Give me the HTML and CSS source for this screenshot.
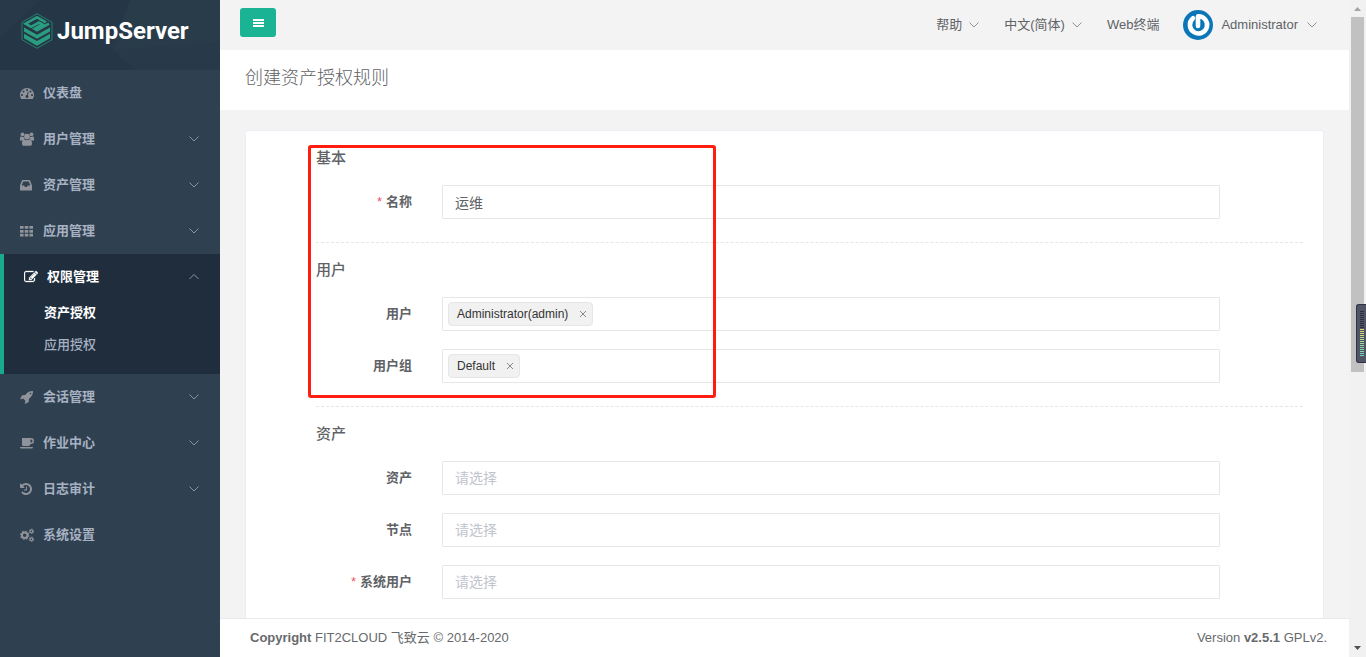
FILE: index.html
```html
<!DOCTYPE html>
<html lang="zh-CN">
<head>
<meta charset="utf-8">
<title>JumpServer</title>
<link rel="stylesheet" href="styles.css">
</head>
<body>
<svg class="symbols" aria-hidden="true">
  <symbol id="down" viewBox="0 0 12 12"><path d="M1.500 3.500L6 8l4.500-4.500" fill="none" stroke="currentColor"/></symbol>
  <symbol id="up" viewBox="0 0 12 12"><path d="M1.500 8L6 3.500 10.500 8" fill="none" stroke="currentColor"/></symbol>
</svg>
<div class="app">
  <aside class="sidebar">
    <a class="brand" href="#">
      <svg class="brand-bg" viewBox="0 0 220 70" preserveAspectRatio="none" aria-hidden="true">
        <path d="M0 0h220v70H0z" fill="#283a49"/><path d="M0 38L40 0h90l-20 48 26 22H0z" fill="#253746"/><path d="M130 0h90v42l-106 8z" fill="#293c4a"/>
      </svg>
      <svg class="brand-mark" viewBox="0 0 32 36" aria-hidden="true">
        <path d="M16 .7L31 9.300v17.400L16 35.300 1 26.700V9.300z" fill="none" stroke="#24806e"/>
        <path d="M25 9.300L16 4.300 4.500 10.700 10 13.800 18 9.500 21.500 11.500 13.500 15.800 16 17.200 28 10.700" fill="none" stroke="#2a9d80" stroke-width="2.600"/>
        <g fill="#2a9d80">
          <path d="M3 14.500l13 7.200 13-7.200v4L16 25.700 3 18.500z"/>
          <path d="M3 20.800L16 28l13-7.200v4.500L16 32.800 3 25.300z"/>
        </g>
      </svg>
      <span class="brand-name">JumpServer</span>
    </a>
    <nav>
      <ul class="menu">
        <li><a class="menu-link" href="#"><svg class="icon" viewBox="0 0 1792 1792"><path d="M384 1152q0-53-37.500-90.500t-90.500-37.500-90.500 37.500-37.500 90.500 37.500 90.500 90.500 37.500 90.500-37.500 37.500-90.500zm192-448q0-53-37.500-90.500t-90.500-37.500-90.500 37.500-37.500 90.500 37.500 90.500 90.500 37.500 90.500-37.500 37.500-90.500zm428 481l101-382q6-26-7.500-48.500t-38.500-29.500-48 6.500-30 39.500l-101 382q-60 5-107 43.500t-63 98.500q-20 77 20 146t117 89 146-20 89-117q16-60-6-117t-72-91zm660-33q0-53-37.500-90.500t-90.500-37.500-90.500 37.500-37.500 90.500 37.500 90.500 90.500 37.500 90.500-37.500 37.500-90.500zm-640-640q0-53-37.500-90.500t-90.500-37.500-90.500 37.500-37.500 90.500 37.500 90.500 90.500 37.500 90.500-37.500 37.500-90.500zm448 192q0-53-37.500-90.500t-90.500-37.500-90.500 37.500-37.500 90.500 37.500 90.500 90.500 37.500 90.500-37.500 37.500-90.500zm320 448q0 261-141 483-19 29-54 29h-1402q-35 0-54-29-141-221-141-483 0-182 71-348t191-286 286-191 348-71 348 71 286 191 191 286 71 348z"/></svg><span>仪表盘</span></a></li>
        <li><a class="menu-link" href="#"><svg class="icon" viewBox="0 0 14 14"><circle cx="2.500" cy="2.300" r="1.900"/><circle cx="11.500" cy="2.300" r="1.900"/><circle cx="7" cy="4.600" r="2.900"/><path d="M0 8.500V6.500C0 4.800.6 4.400 1.200 4.600q1.400.7 2.500.2.100 1.500 1 2.300-1 .2-1.700 1.400zM14 8.500v-2c0-1.700-.6-2.100-1.200-1.900q-1.400.7-2.500.2-.1 1.500-1 2.300 1 .2 1.700 1.400zM2 11.500C2 8.800 3 7.500 4.300 7.500q2.700 1.500 5.400 0C11 7.500 12 8.800 12 11.500c0 1.500-.8 2.300-1.800 2.300H3.800c-1 0-1.800-.8-1.800-2.300z"/></svg><span>用户管理</span><svg class="caret"><use href="#down"/></svg></a></li>
        <li><a class="menu-link" href="#"><svg class="icon" viewBox="0 0 14 14"><path fill-rule="evenodd" d="M2.700 2h6.600q.6 0 .8.600L12 7.500V12q0 .6-.6.600H.6Q0 12.600 0 12V7.500l1.900-4.900q.2-.6.800-.6zM3.200 3.500L1.700 7.500h2.500l.8 1.600h2l.8-1.600h2.500L8.800 3.500z"/></svg><span>资产管理</span><svg class="caret"><use href="#down"/></svg></a></li>
        <li><a class="menu-link" href="#"><svg class="icon" viewBox="0 0 14 14"><path d="M0 2h3.600v2.800H0zM4.700 2h3.600v2.800H4.700zM9.400 2H13v2.800H9.400zM0 5.900h3.600v2.800H0zM4.700 5.900h3.600v2.800H4.700zM9.400 5.900H13v2.800H9.400zM0 9.800h3.600v2.700H0zM4.700 9.800h3.600v2.700H4.700zM9.400 9.800H13v2.700H9.400z"/></svg><span>应用管理</span><svg class="caret"><use href="#down"/></svg></a></li>
        <li class="open"><a class="menu-link" href="#"><svg class="icon" viewBox="0 0 1792 1792"><path d="M888 1184l116-116-152-152-116 116v56h96v96h56zm440-720q-16-16-33 1l-350 350q-17 17-1 33t33-1l350-350q17-17 1-33zm80 594v190q0 119-84.500 203.500t-203.500 84.500h-832q-119 0-203.500-84.500t-84.500-203.500v-832q0-119 84.500-203.500t203.500-84.500h832q63 0 117 25 15 7 18 23 3 17-9 29l-49 49q-14 14-32 8-23-6-45-6h-832q-66 0-113 47t-47 113v832q0 66 47 113t113 47h832q66 0 113-47t47-113v-126q0-13 9-22l64-64q15-15 35-7t20 29zm-96-738l288 288-672 672h-288v-288zm444 132l-92 92-288-288 92-92q28-28 68-28t68 28l152 152q28 28 28 68t-28 68z" stroke="currentColor" stroke-width="40"/></svg><span>权限管理</span><svg class="caret"><use href="#up"/></svg></a>
          <ul class="submenu">
            <li><a class="current" href="#">资产授权</a></li>
            <li><a href="#">应用授权</a></li>
          </ul>
        </li>
        <li><a class="menu-link" href="#"><svg class="icon" viewBox="0 0 1792 1792"><path d="M1440 448q0-40-28-68t-68-28-68 28-28 68 28 68 68 28 68-28 28-68zm224-288q0 249-75.500 430.500t-253.500 360.500q-81 80-195 176l-20 379q-2 16-16 26l-384 224q-7 4-16 4-12 0-23-9l-64-64q-13-14-8-32l85-276-281-281-276 85q-3 1-9 1-14 0-23-9l-64-64q-17-19-5-39l224-384q10-14 26-16l379-20q96-114 176-195 188-187 358-258t431-71q14 0 24 9.500t10 22.500z"/></svg><span>会话管理</span><svg class="caret"><use href="#down"/></svg></a></li>
        <li><a class="menu-link" href="#"><svg class="icon" viewBox="0 0 14 14"><path fill-rule="evenodd" d="M2 2h9a3 3 0 0 1 0 6h-.5Q10.300 10 8.500 10h-5Q2 10 2 8.500zM10.500 3.500v3h.5a1.500 1.500 0 0 0 0-3z"/><path d="M0 11h13q0 1.500-1.500 1.500h-10Q0 12.500 0 11z"/></svg><span>作业中心</span><svg class="caret"><use href="#down"/></svg></a></li>
        <li><a class="menu-link" href="#"><svg class="icon" viewBox="128 0 1792 1792"><path d="M1664 896q0 156-61 298t-164 245-245 164-298 61q-172 0-327-72.500t-264-204.500q-7-10-6.500-22.500t8.500-20.500l137-138q10-9 25-9 16 2 23 12 73 95 179 147t225 52q104 0 198.500-40.500t163.500-109.500 109.500-163.500 40.500-198.500-40.500-198.500-109.500-163.500-163.500-109.500-198.500-40.500q-98 0-188 35.500t-160 101.500l137 138q31 30 14 69-17 40-59 40h-448q-26 0-45-19t-19-45v-448q0-42 40-59 39-17 69 14l130 129q107-101 244.500-156.500t284.500-55.500q156 0 298 61t245 164 164 245 61 298zm-640-288v448q0 14-9 23t-23 9h-320q-14 0-23-9t-9-23v-64q0-14 9-23t23-9h224v-352q0-14 9-23t23-9h64q14 0 23 9t9 23z"/></svg><span>日志审计</span><svg class="caret"><use href="#down"/></svg></a></li>
        <li><a class="menu-link" href="#"><svg class="icon" viewBox="0 0 14 14"><g fill="none" stroke="currentColor"><circle cx="4.700" cy="7.300" r="2.800" stroke-width="2"/><circle cx="4.700" cy="7.300" r="4.100" stroke-width="1.200" stroke-dasharray="1.600 1.620"/><circle cx="11.500" cy="3.300" r="1.500" stroke-width="1.300"/><circle cx="11.500" cy="3.300" r="2.300" stroke-width=".8" stroke-dasharray="1.200 1.200"/><circle cx="11.500" cy="11.300" r="1.500" stroke-width="1.300"/><circle cx="11.500" cy="11.300" r="2.300" stroke-width=".8" stroke-dasharray="1.200 1.200"/></g></svg><span>系统设置</span></a></li>
      </ul>
    </nav>
  </aside>

  <div class="main">
    <header class="topbar">
      <button class="toggle" type="button" aria-label="切换菜单"><svg viewBox="0 0 12 10"><path d="M1 1h11v2H1zM1 4h11v2H1zM1 7h11v2H1z" fill="#fff"/></svg></button>
      <div class="top-links">
        <a class="top-link" href="#">帮助<svg class="caret"><use href="#down"/></svg></a>
        <a class="top-link" href="#">中文(简体)<svg class="caret"><use href="#down"/></svg></a>
        <a class="top-link" href="#">Web终端</a>
        <a class="top-link user" href="#">
          <svg class="avatar" viewBox="0 0 30 30" aria-hidden="true"><circle cx="15" cy="15" r="15" fill="#0a76b8"/><path d="M10 8.300A8.600 8.600 0 1 0 15 6.300V16" fill="none" stroke="#fff" stroke-width="4.600" stroke-linejoin="round" stroke-linecap="round"/></svg>
          <span>Administrator</span><svg class="caret"><use href="#down"/></svg>
        </a>
      </div>
    </header>
    <div class="page-heading"><h1>创建资产授权规则</h1></div>
    <main class="content">
      <form class="card">
        <section class="group">
          <h2>基本</h2>
          <div class="fields">
            <div class="field"><label for="name"><span class="star">*</span>名称</label><input class="control" id="name" type="text" value="运维"></div>
          </div>
        </section>
        <section class="group">
          <h2>用户</h2>
          <div class="fields">
            <div class="field"><label for="users">用户</label><div class="control tags"><span class="tag">Administrator(admin)<button type="button" aria-label="移除"><svg viewBox="0 0 8 8"><path d="M1 1l6 6M7 1L1 7" stroke="currentColor"/></svg></button></span><input id="users" type="text"></div></div>
            <div class="field"><label for="groups">用户组</label><div class="control tags"><span class="tag">Default<button type="button" aria-label="移除"><svg viewBox="0 0 8 8"><path d="M1 1l6 6M7 1L1 7" stroke="currentColor"/></svg></button></span><input id="groups" type="text"></div></div>
          </div>
        </section>
        <section class="group">
          <h2>资产</h2>
          <div class="fields">
            <div class="field"><label for="assets">资产</label><input class="control" id="assets" type="text" placeholder="请选择"></div>
            <div class="field"><label for="nodes">节点</label><input class="control" id="nodes" type="text" placeholder="请选择"></div>
            <div class="field"><label for="sysusers"><span class="star">*</span>系统用户</label><input class="control" id="sysusers" type="text" placeholder="请选择"></div>
          </div>
        </section>
        <div class="highlight"></div>
      </form>
    </main>
    <footer class="footer">
      <span><b>Copyright</b> FIT2CLOUD 飞致云 © 2014-2020</span>
      <span>Version <b>v2.5.1</b> GPLv2.</span>
    </footer>
  </div>

  <div class="scrollbar" aria-hidden="true">
    <svg class="arrow" viewBox="0 0 17 17"><path d="M5 11h7L8.500 7z" fill="#a3a3a3"/></svg>
    <div class="track"><div class="thumb"></div></div>
    <svg class="arrow" viewBox="0 0 17 17"><path d="M5 6h7l-3.500 4z" fill="#505050"/></svg>
    <div class="meter"><i class="idle"></i><i class="level"></i></div>
  </div>
</div>
</body>
</html>
```

FILE: styles.css
```css
* { box-sizing: border-box; }
body {
  margin: 0;
  font: 13px/20px "Liberation Sans", "Noto Sans CJK SC", sans-serif;
  color: #606266;
}
a { color: inherit; text-decoration: none; }
ul { list-style: none; margin: 0; padding: 0; }
svg { display: block; flex: none; }
.symbols { display: none; }
.app { display: flex; height: 100vh; overflow: hidden; }
.caret { width: 12px; height: 12px; color: #909399; }

.sidebar { width: 220px; flex: none; background: #2f4050; color: #a7b1c2; }
.brand {
  position: relative;
  display: flex;
  align-items: center;
  gap: 4px;
  height: 70px;
  padding: 0 20px 8px 21px;
}
.brand-bg { position: absolute; inset: 0; width: 100%; height: 100%; }
.brand-mark { position: relative; width: 32px; height: 36px; }
.brand-name { position: relative; font: 700 24px/36px Roboto, sans-serif; color: #fff; }
.menu-link {
  display: flex;
  align-items: center;
  height: 46px;
  padding: 0 20px;
  font-weight: 600;
}
.icon { width: 14px; height: 14px; margin-right: 9px; fill: currentColor; color: #909399; }
.menu-link .caret { margin-left: auto; }
.open { background: #1f2d3d; border-left: 4px solid #19aa8d; }
.open .menu-link, .open .icon, .submenu .current { color: #fff; }
.open .caret { color: #909399; }
.submenu { display: flex; flex-direction: column; gap: 6px; padding: 0 0 16px 40px; }
.submenu a { display: block; line-height: 26px; font-weight: 500; }
.submenu .current { font-weight: 600; }

.main { flex: 1; min-width: 0; display: flex; flex-direction: column; background: #f3f3f3; }
.topbar { display: flex; justify-content: space-between; height: 50px; flex: none; padding: 0 31px 0 20px; }
.toggle {
  display: grid;
  place-items: center;
  width: 36px;
  height: 29px;
  margin-top: 8px;
  border: 0;
  border-radius: 3px;
  background: #1ab394;
}
.toggle svg { width: 12px; height: 10px; }
.top-links { display: flex; align-items: center; gap: 24px; }
.top-link { display: flex; align-items: center; gap: 6px; }
.user { gap: 8px; }
.avatar { width: 30px; height: 30px; }

.page-heading { flex: none; padding: 15px 25px 19px; background: #fff; }
h1 { margin: 0; font-size: 18px; line-height: 26px; font-weight: 300; }
.content { flex: 1; min-height: 0; display: flex; padding: 20px 25px 0; overflow: hidden; }
.card {
  position: relative;
  flex: 1;
  padding: 0 20px 0 70px;
  background: #fff;
  border: 1px solid #ebeef5;
  border-bottom: 0;
  border-radius: 3px 3px 0 0;
}
.group { padding-bottom: 23px; border-bottom: 1px dashed #e4e7ea; }
.group:last-of-type { border-bottom: 0; }
h2 { margin: 0; padding: 17px 0; font-size: 15px; line-height: 20px; font-weight: 500; }
.fields { display: grid; gap: 18px; padding-right: 83px; }
.field { display: grid; grid-template-columns: 96px 1fr; gap: 30px; }
.field label { line-height: 34px; text-align: right; font-weight: 600; }
.star { margin-right: 4px; color: #ed5565; font-weight: 400; }
.control {
  width: 100%;
  height: 34px;
  padding: 0 12px;
  border: 1px solid #e5e6e7;
  border-radius: 1px;
  background: #fff;
  font: inherit;
  font-size: 14px;
  color: #606266;
}
.control::placeholder { color: #c0c4cc; }
.tags { display: flex; align-items: center; padding: 0 5px; }
.tags input { flex: 1; min-width: 0; border: 0; outline: 0; }
.tag {
  display: flex;
  align-items: center;
  gap: 8px;
  height: 24px;
  padding: 0 2px 0 8px;
  border: 1px solid #e4e6e8;
  border-radius: 4px;
  background: #f1f1f1;
  font-size: 12px;
  color: #333;
}
.tag button { width: 14px; height: 14px; padding: 3px; border: 0; background: none; color: #84888e; }
.tag svg { width: 8px; height: 8px; }
.highlight {
  position: absolute;
  top: 14px;
  left: 62px;
  width: 408px;
  height: 253px;
  border: 3px solid #ff1d0f;
  border-radius: 3px;
  pointer-events: none;
}
.footer {
  display: flex;
  justify-content: space-between;
  flex: none;
  padding: 9px 22px 9px 30px;
  border-top: 1px solid #e7eaec;
  background: #fff;
  color: #676a6c;
}

.scrollbar { position: relative; display: flex; flex-direction: column; width: 17px; flex: none; background: #f1f1f1; }
.arrow { width: 17px; height: 17px; }
.track { flex: 1; padding: 0 2px; }
.thumb { height: 57%; background: #c1c1c1; }
.meter {
  position: absolute;
  top: 304px;
  right: 0;
  width: 10px;
  height: 59px;
  padding: 6px 1px 6px 3px;
  border: 1px solid #30323f;
  border-right: 0;
  border-radius: 3px 0 0 3px;
  background: #505565;
}
.meter i { display: block; width: 4px; }
.idle { height: 18px; background: repeating-linear-gradient(#2c2e39 0 1px, #505565 1px 2px); }
.level { height: 28px; background: repeating-linear-gradient(transparent 0 1px, #505565 1px 2px), linear-gradient(#e5d870, #68d6c0); }
```
